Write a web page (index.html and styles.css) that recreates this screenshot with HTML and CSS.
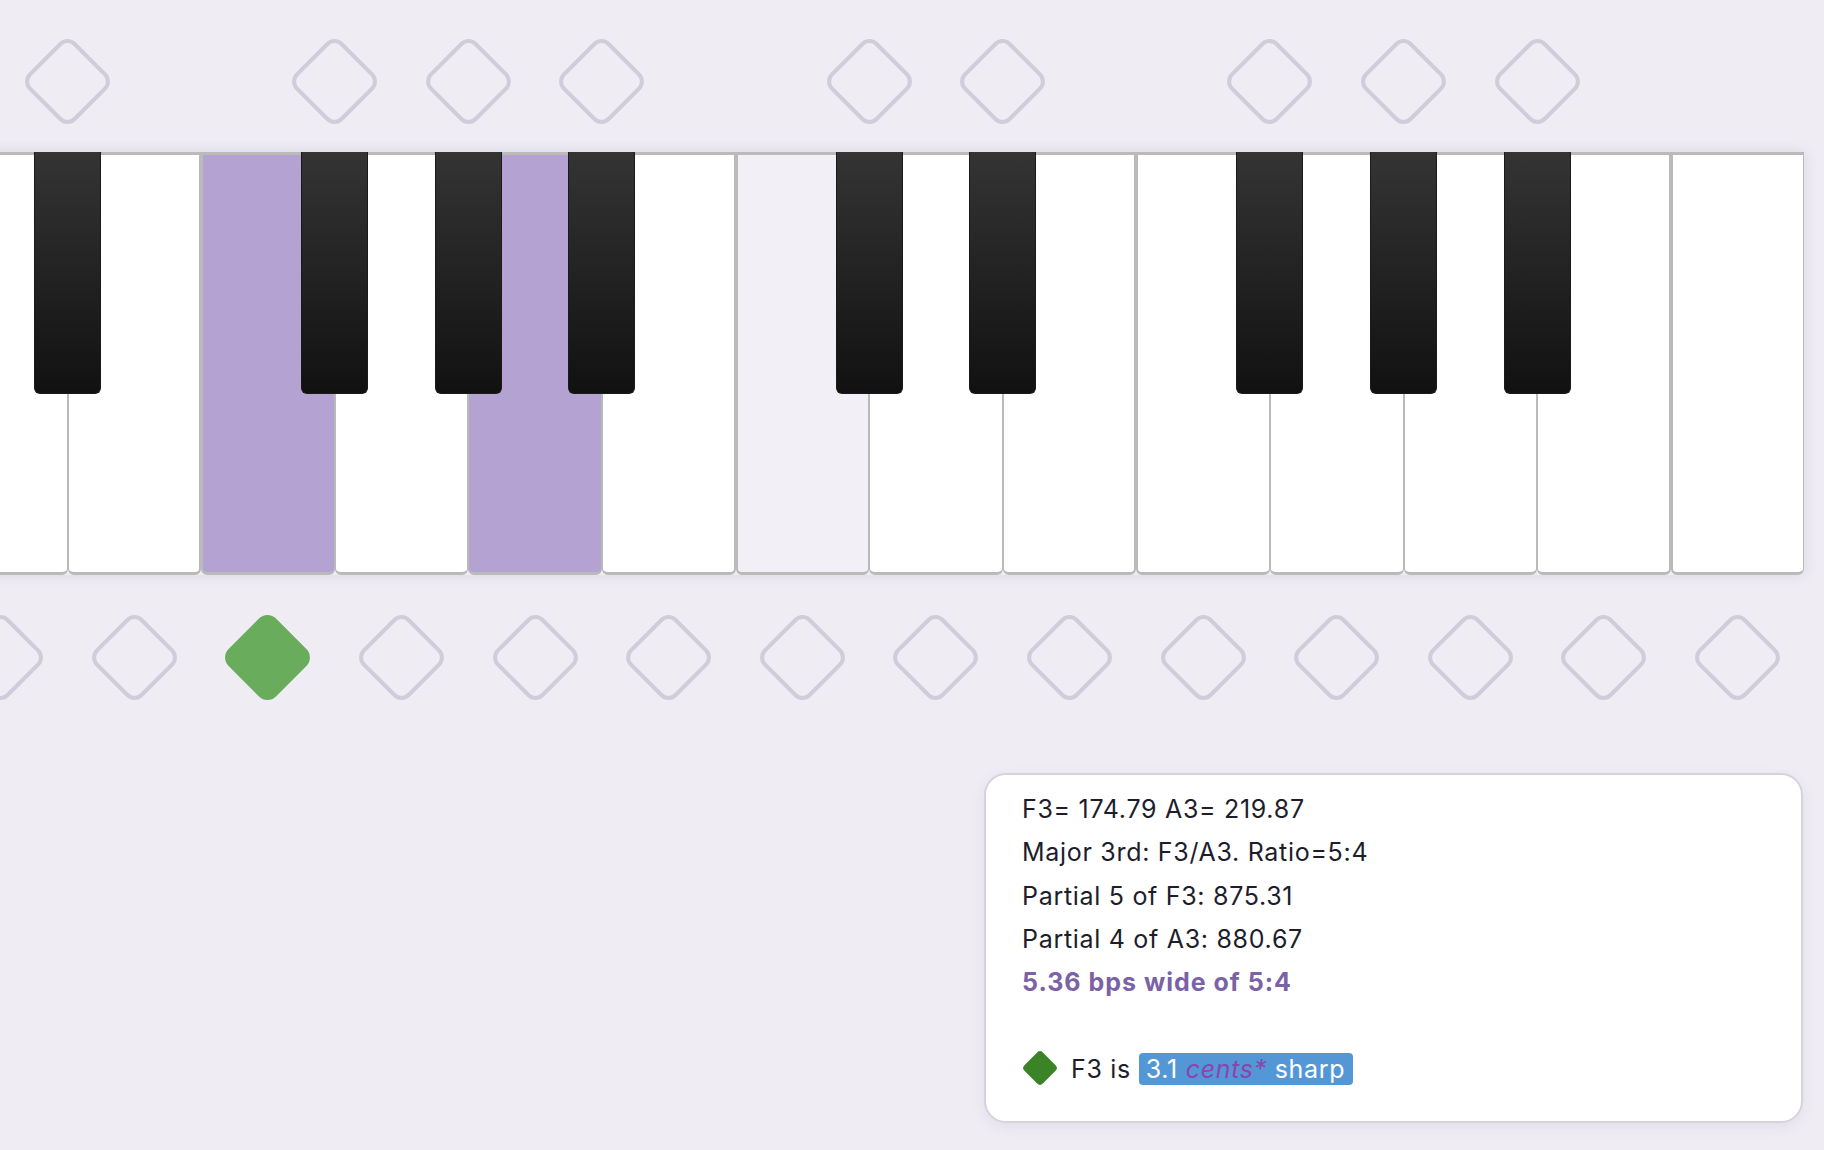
FILE: index.html
```html
<!DOCTYPE html>
<html lang="en">
<head>
<meta charset="utf-8">
<title>Interval tuner</title>
<link rel="stylesheet" href="styles.css">
</head>
<body>
<div class="stage">
  <div class="marks marks-top">
    <div class="slot"><div class="dia"></div></div>
    <div class="slot"></div>
    <div class="slot"><div class="dia"></div></div>
    <div class="slot"><div class="dia"></div></div>
    <div class="slot"><div class="dia"></div></div>
    <div class="slot"></div>
    <div class="slot"><div class="dia"></div></div>
    <div class="slot"><div class="dia"></div></div>
    <div class="slot"></div>
    <div class="slot"><div class="dia"></div></div>
    <div class="slot"><div class="dia"></div></div>
    <div class="slot"><div class="dia"></div></div>
    <div class="slot"></div>
  </div>

  <div class="keyboard">
    <div class="wk"></div>
    <div class="wk edge-r"></div>
    <div class="wk edge-l on"></div>
    <div class="wk"></div>
    <div class="wk on"></div>
    <div class="wk edge-r"></div>
    <div class="wk edge-l middle"></div>
    <div class="wk"></div>
    <div class="wk edge-r"></div>
    <div class="wk edge-l"></div>
    <div class="wk"></div>
    <div class="wk"></div>
    <div class="wk edge-r"></div>
    <div class="wk edge-l"></div>
    <div class="black-row">
      <div class="slot"><div class="bk"></div></div>
      <div class="slot"></div>
      <div class="slot"><div class="bk"></div></div>
      <div class="slot"><div class="bk"></div></div>
      <div class="slot"><div class="bk"></div></div>
      <div class="slot"></div>
      <div class="slot"><div class="bk"></div></div>
      <div class="slot"><div class="bk"></div></div>
      <div class="slot"></div>
      <div class="slot"><div class="bk"></div></div>
      <div class="slot"><div class="bk"></div></div>
      <div class="slot"><div class="bk"></div></div>
      <div class="slot"></div>
    </div>
  </div>

  <div class="marks marks-bottom">
    <div class="slot"><div class="dia"></div></div>
    <div class="slot"><div class="dia"></div></div>
    <div class="slot"><div class="dia filled"></div></div>
    <div class="slot"><div class="dia"></div></div>
    <div class="slot"><div class="dia"></div></div>
    <div class="slot"><div class="dia"></div></div>
    <div class="slot"><div class="dia"></div></div>
    <div class="slot"><div class="dia"></div></div>
    <div class="slot"><div class="dia"></div></div>
    <div class="slot"><div class="dia"></div></div>
    <div class="slot"><div class="dia"></div></div>
    <div class="slot"><div class="dia"></div></div>
    <div class="slot"><div class="dia"></div></div>
    <div class="slot"><div class="dia"></div></div>
  </div>

  <div class="card">
    <div class="line">F3= 174.79 A3= 219.87</div>
    <div class="line">Major 3rd: F3/A3. Ratio=5:4</div>
    <div class="line">Partial 5 of F3: 875.31</div>
    <div class="line">Partial 4 of A3: 880.67</div>
    <div class="line beat">5.36 bps wide of 5:4</div>
    <div class="line blank"></div>
    <div class="line"><span class="mini-dia"></span>F3 is <span class="hl">3.1 <em class="cents">cents*</em> sharp</span></div>
  </div>
</div>
</body>
</html>
```

FILE: styles.css
```css
html, body {
  margin: 0;
  padding: 0;
}
body {
  background: #efecf4;
  font-family: Inter, "Noto Sans", "Liberation Sans", sans-serif;
  color: #1d1d2b;
  overflow: hidden;
}
.stage {
  width: 1824px;
  height: 1150px;
}

/* diamond marker rows */
.marks {
  display: flex;
  align-items: center;
}
.marks .slot {
  flex: 0 0 133.6px;
  display: flex;
  justify-content: center;
  align-items: center;
}
.marks-top {
  height: 142px;
  padding-top: 10px;
  margin-left: 0.8px;
}
.marks-bottom {
  height: 164px;
  margin-left: -66px;
}
.dia {
  width: 67px;
  height: 67px;
  box-sizing: border-box;
  border: 4px solid #d0ccda;
  border-radius: 12px;
  transform: rotate(45deg);
}
.dia.filled {
  background: #69ad5c;
  border-color: #69ad5c;
}

/* keyboard */
.keyboard {
  position: relative;
  display: flex;
  margin-left: -66px;
  width: 1870.4px;
  height: 423px;
  box-shadow: 0 0 14px rgba(70, 60, 100, 0.12);
  border-radius: 0 0 6px 6px;
}
.wk {
  flex: 0 0 133.6px;
  box-sizing: border-box;
  height: 423px;
  background: #ffffff;
  border: 0 solid #bababa;
  border-width: 3px 1.5px 3px 1.5px;
  border-radius: 0 0 6px 6px;
}
.wk.edge-l { border-left-width: 2.6px; }
.wk.edge-r { border-right-width: 2.6px; }
.wk.on { background: #b4a2d2; }
.wk.middle { background: #f2f0f6; }

.black-row {
  position: absolute;
  top: 0;
  left: 66.8px;
  display: flex;
}
.black-row .slot {
  flex: 0 0 133.6px;
  display: flex;
  justify-content: center;
}
.bk {
  width: 67px;
  height: 242px;
  box-sizing: border-box;
  background: linear-gradient(#343434, #111111);
  border: 1px solid #1a1a1a;
  border-top: 0;
  border-radius: 0 0 6px 6px;
}

/* info card */
.card {
  box-sizing: border-box;
  margin: 34px 0 0 984px;
  width: 819px;
  height: 350px;
  background: #ffffff;
  border: 2px solid #d6d3de;
  border-radius: 22px;
  padding: 13px 36px 0 36px;
  box-shadow: 0 4px 14px rgba(70, 60, 100, 0.07);
  font-size: 25px;
  line-height: 43.3px;
  letter-spacing: 0.7px;
}
.line {
  height: 43.3px;
  white-space: nowrap;
}
.beat {
  color: #7b62a6;
  font-weight: 700;
  letter-spacing: 1px;
}
.mini-dia {
  display: inline-block;
  width: 26px;
  height: 26px;
  background: #3b8327;
  border-radius: 4px;
  transform: rotate(45deg);
  vertical-align: middle;
  margin: -6px 18px 0 5px;
}
.hl {
  display: inline-block;
  background: #5397d7;
  color: #ffffff;
  line-height: 32px;
  padding: 0 8px 0 7px;
  border-radius: 4px;
}
.cents {
  color: #8e44ad;
  font-style: italic;
}
```
